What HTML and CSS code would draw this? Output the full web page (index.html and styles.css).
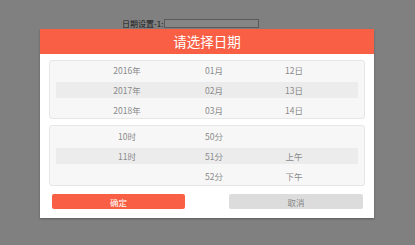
FILE: index.html
```html
<!DOCTYPE html>
<html lang="zh">
<head>
    <meta charset="UTF-8">
    <title>请选择日期</title>
    <link rel="stylesheet" href="styles.css">
</head>
<body>
    <div class="campo">
        <span class="etiqueta">日期设置-1:</span>
        <input class="entrada" type="text">
    </div>

    <div class="modal">
        <div class="modal-titulo">请选择日期</div>
        <div class="modal-cuerpo">
            <!-- fecha -->
            <div class="panel">
                <div class="fila"><span>2016年</span><span>01月</span><span>12日</span></div>
                <div class="fila activa"><span>2017年</span><span>02月</span><span>13日</span></div>
                <div class="fila"><span>2018年</span><span>03月</span><span>14日</span></div>
            </div>
            <!-- hora -->
            <div class="panel panel-hora">
                <div class="fila"><span>10时</span><span>50分</span><span></span></div>
                <div class="fila activa"><span>11时</span><span>51分</span><span>上午</span></div>
                <div class="fila"><span></span><span>52分</span><span>下午</span></div>
            </div>
            <div class="botones">
                <button class="btn btn-ok">确定</button>
                <button class="btn btn-cancelar">取消</button>
            </div>
        </div>
    </div>
</body>
</html>
```

FILE: styles.css
```css
body {
    margin: 0;
    padding: 0;
    background-color: #808080;
    font-family: 'Noto Sans CJK SC', 'DejaVu Sans', sans-serif;
    width: 415px;
    height: 245px;
    overflow: hidden;
}

.campo {
    display: flex;
    align-items: center;
    height: 9px;
    padding: 19px 0 0 122px;
}

.etiqueta {
    font-size: 8px;
    color: #1a1a1a;
    line-height: 9px;
}

.entrada {
    box-sizing: border-box;
    width: 95px;
    height: 9px;
    margin: 0 0 0 1px;
    padding: 0;
    border: 1px solid #5a5a5a;
    background-color: #858585;
}

.modal {
    margin: 1px 0 0 40px;
    width: 334px;
    background-color: #fff;
    box-shadow: 0 1px 2px rgba(0, 0, 0, 0.3);
}

.modal-titulo {
    background-color: #f95f45;
    color: #fff;
    height: 25px;
    line-height: 25px;
    text-align: center;
    font-size: 13.5px;
}

.modal-cuerpo {
    padding: 6px 9px 9px;
    display: flex;
    flex-direction: column;
    gap: 6px;
}

.panel {
    border: 1px solid #e6e6e6;
    border-radius: 3px;
    background-color: #f7f7f7;
    padding: 1px 6px 0;
    display: flex;
    flex-direction: column;
    gap: 4px;
}

.panel-hora {
    padding: 2px 6px 1px;
}

.fila {
    display: grid;
    grid-template-columns: 142px 32px 1fr;
    height: 16px;
    line-height: 16px;
    font-size: 8.5px;
    color: #8a8a8a;
    text-align: center;
}

.fila.activa {
    background-color: #ececec;
}

.botones {
    display: flex;
    justify-content: space-between;
    padding: 2px 2px 0 3px;
}

.btn {
    width: 134px;
    height: 15px;
    border: none;
    border-radius: 2px;
    font-family: inherit;
    font-size: 8.5px;
    padding: 0;
    cursor: pointer;
}

.btn-ok {
    background-color: #f95f45;
    color: #fff;
    width: 133px;
}

.btn-cancelar {
    background-color: #dcdcdc;
    color: #888;
}
```
